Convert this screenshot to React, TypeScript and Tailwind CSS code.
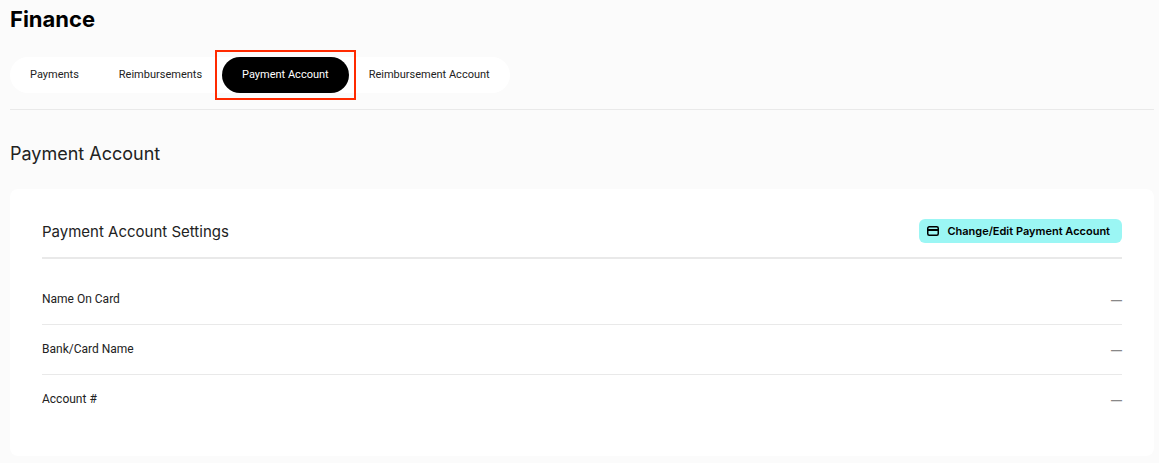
const tabs = ["Payments", "Reimbursements", "Payment Account", "Reimbursement Account"];
const activeTab = "Payment Account";

const details = [
  { label: "Name On Card", value: "—" },
  { label: "Bank/Card Name", value: "—" },
  { label: "Account #", value: "—" },
];

function CardIcon() {
  return (
    <svg className="h-3 w-3 shrink-0" viewBox="0 0 12 12" fill="none" aria-hidden="true">
      <rect x="0.75" y="1.75" width="10.5" height="8.5" rx="1.5" stroke="currentColor" strokeWidth="1.5" />
      <path d="M1 5h10" stroke="currentColor" strokeWidth="2" />
    </svg>
  );
}

function Tab({ name }: { name: string }) {
  if (name === activeTab) {
    return (
      <a
        href="#"
        aria-current="page"
        className="relative flex h-9 items-center rounded-full bg-black px-5 text-white"
      >
        {name}
        <span className="pointer-events-none absolute -inset-x-[7px] -inset-y-[7px] border-2 border-[#ff2a00]" />
      </a>
    );
  }
  return (
    <a href="#" className="flex h-9 items-center rounded-full px-5 text-[#222222]">
      {name}
    </a>
  );
}

export default function App() {
  return (
    <main className="min-h-screen bg-[#fbfbfb] pr-[5px] pb-[7px] pl-[10px] font-['Inter',sans-serif] text-[#222222]">
      <h1 className="pt-1 text-[22px] leading-[30px] font-bold text-black">Finance</h1>

      <div className="border-b border-[#e9e9e9] pt-[23px] pb-4">
        <nav className="flex w-fit rounded-full bg-white font-['Roboto',sans-serif] text-[11px] whitespace-nowrap">
          {tabs.map((name) => (
            <Tab key={name} name={name} />
          ))}
        </nav>
      </div>

      <h2 className="pt-[30px] text-lg leading-7">Payment Account</h2>

      <section className="mt-[21px] rounded-lg bg-white px-8 pt-[30px] pb-8">
        <div className="flex items-start justify-between border-b-2 border-[#e9e9e9] pb-3">
          <h3 className="text-[15px] leading-[26px]">Payment Account Settings</h3>
          <button
            type="button"
            className="flex h-6 items-center gap-2 rounded-md bg-[#9bf6f4] pr-3 pl-2 text-[11px] font-semibold text-black"
          >
            <CardIcon />
            Change/Edit Payment Account
          </button>
        </div>

        <dl className="pt-4 text-xs">
          {details.map(({ label, value }) => (
            <div
              key={label}
              className="box-content flex h-[49px] items-center justify-between border-b border-[#e9e9e9] last:border-b-0"
            >
              <dt className="pb-[2px] font-['Roboto',sans-serif]">{label}</dt>
              <dd className="pt-[2px] text-[11px] font-semibold text-[#888888]">{value}</dd>
            </div>
          ))}
        </dl>
      </section>
    </main>
  );
}
